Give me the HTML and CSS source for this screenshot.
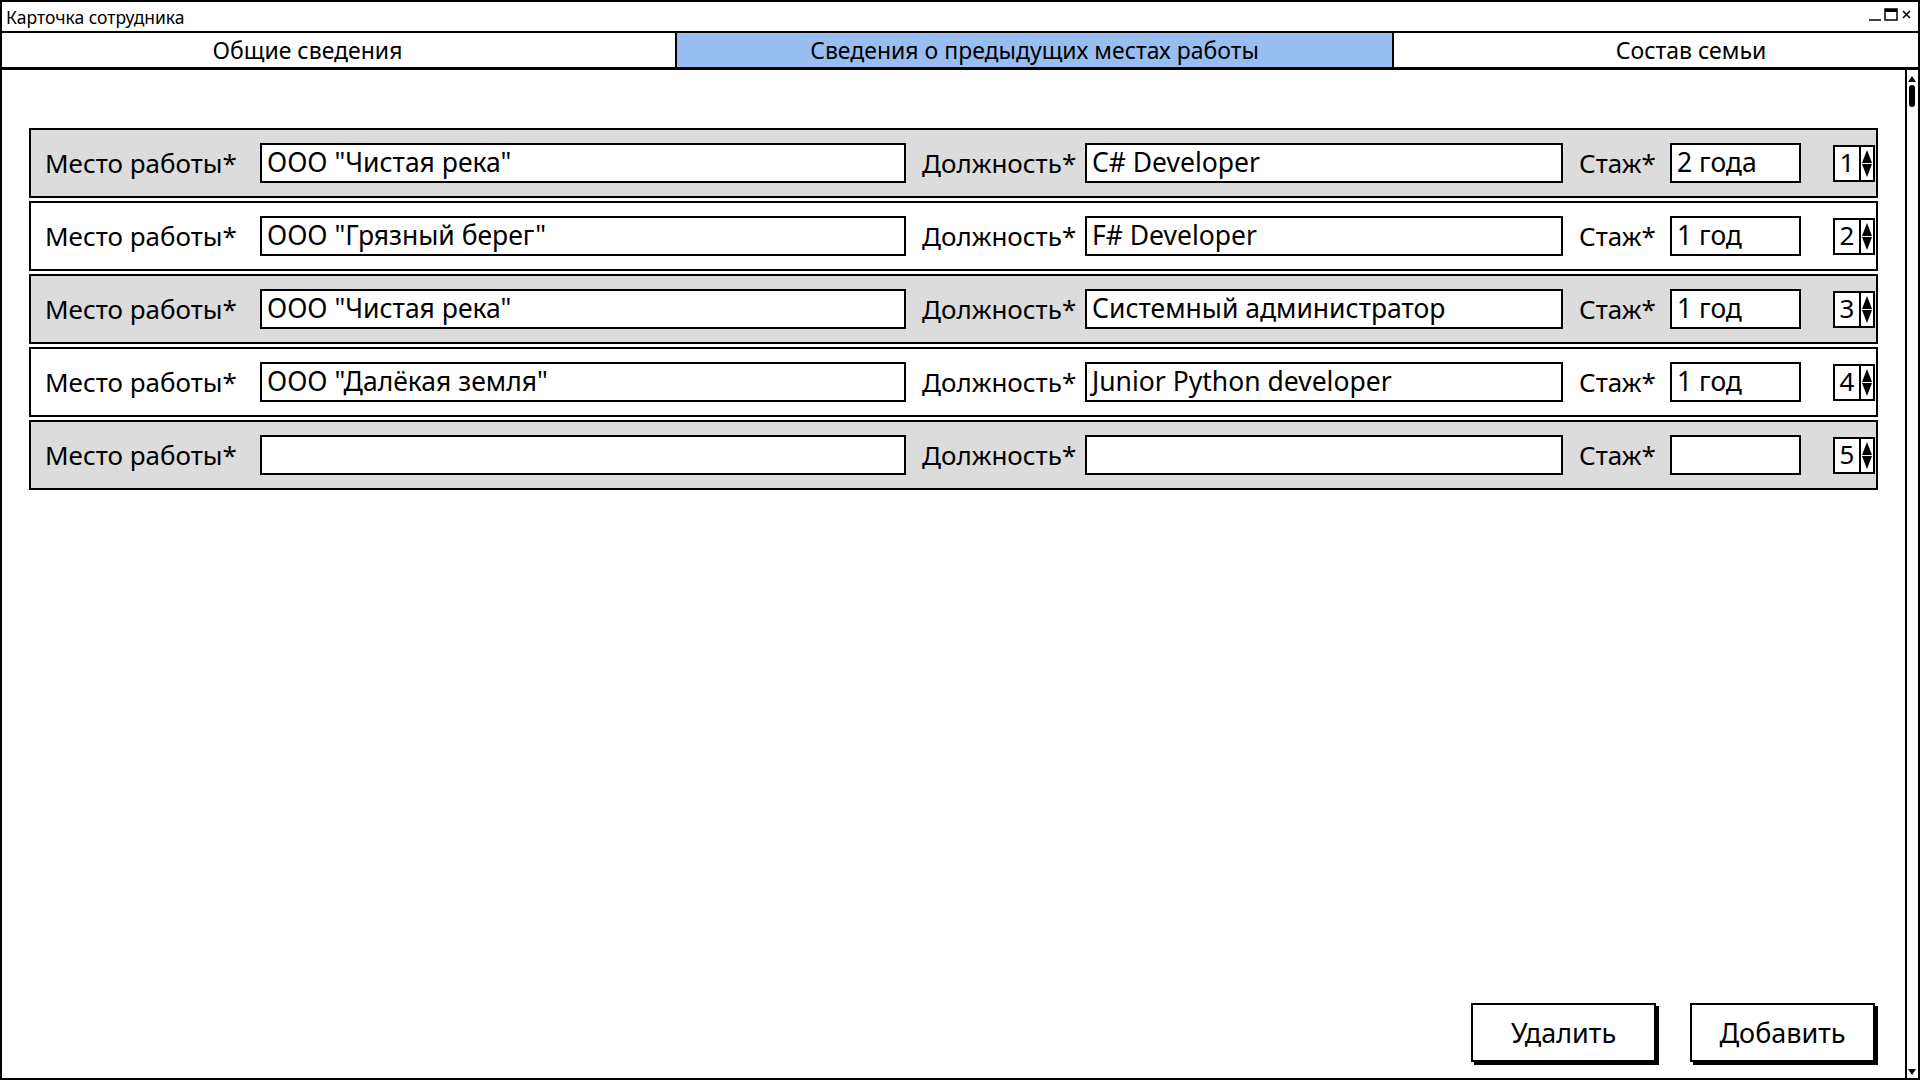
FILE: index.html
```html
<!DOCTYPE html>
<html lang="ru">
  <head>
    <meta charset="UTF-8" />
    <title>Карточка сотрудника</title>
    <link rel="stylesheet" href="styles.css">
  </head>
  <body>
    <div class="window">
      <div class="titlebar">
        <span class="title">Карточка сотрудника</span>
        <svg class="controls" width="48" height="16" viewBox="0 0 48 16">
          <!-- minimize / maximize / close -->
          <line x1="1" y1="14" x2="13" y2="14" stroke="#000" stroke-width="1.5" />
          <rect x="17" y="3" width="12" height="11" fill="none" stroke="#000" stroke-width="1.5" />
          <rect x="17" y="3" width="12" height="3" fill="#000" />
          <path d="M35 5 L42 12 M42 5 L35 12" stroke="#000" stroke-width="1.6" />
        </svg>
      </div>

      <div class="tabs">
        <div class="tab first">Общие сведения</div>
        <div class="tab active">Сведения о предыдущих местах работы</div>
        <div class="tab last">Состав семьи</div>
      </div>

      <div class="body">
        <div class="content">
          <div class="rows">
            <div class="row grey">
              <span class="label">Место работы*</span>
              <div class="field">ООО "Чистая река"</div>
              <span class="label pad">Должность*</span>
              <div class="field">C# Developer</div>
              <span class="label pad">Стаж*</span>
              <div class="field">2 года</div>
              <div class="spin"><span class="num">1</span><span class="arrows"></span></div>
            </div>
            <div class="row">
              <span class="label">Место работы*</span>
              <div class="field">ООО "Грязный берег"</div>
              <span class="label pad">Должность*</span>
              <div class="field">F# Developer</div>
              <span class="label pad">Стаж*</span>
              <div class="field">1 год</div>
              <div class="spin"><span class="num">2</span><span class="arrows"></span></div>
            </div>
            <div class="row grey">
              <span class="label">Место работы*</span>
              <div class="field">ООО "Чистая река"</div>
              <span class="label pad">Должность*</span>
              <div class="field">Системный администратор</div>
              <span class="label pad">Стаж*</span>
              <div class="field">1 год</div>
              <div class="spin"><span class="num">3</span><span class="arrows"></span></div>
            </div>
            <div class="row">
              <span class="label">Место работы*</span>
              <div class="field">ООО "Далёкая земля"</div>
              <span class="label pad">Должность*</span>
              <div class="field">Junior Python developer</div>
              <span class="label pad">Стаж*</span>
              <div class="field">1 год</div>
              <div class="spin"><span class="num">4</span><span class="arrows"></span></div>
            </div>
            <div class="row grey">
              <span class="label">Место работы*</span>
              <div class="field"></div>
              <span class="label pad">Должность*</span>
              <div class="field"></div>
              <span class="label pad">Стаж*</span>
              <div class="field"></div>
              <div class="spin"><span class="num">5</span><span class="arrows"></span></div>
            </div>
          </div>

          <div class="actions">
            <button class="btn">Удалить</button>
            <button class="btn">Добавить</button>
          </div>
        </div>

        <div class="scrollbar">
          <span class="arrow-up"></span>
          <span class="thumb"></span>
          <span class="arrow-down"></span>
        </div>
      </div>
    </div>
  </body>
</html>
```

FILE: styles.css
```css
* {
  margin: 0;
  padding: 0;
  box-sizing: border-box;
  font-family: "Noto Sans", "DejaVu Sans", sans-serif;
}

body {
  background-color: #ffffff;
  color: #000000;
}

.window {
  display: flex;
  flex-direction: column;
  width: 100vw;
  height: 100vh;
  border: 2px solid #000000;
}

/* title bar */
.titlebar {
  display: flex;
  align-items: center;
  justify-content: space-between;
  height: 31px;
  padding: 0 2px 0 4px;
  border-bottom: 2px solid #000000;
}

.title {
  font-size: 17.5px;
}

.controls {
  display: block;
  margin-bottom: 6px;
}

/* tabs */
.tabs {
  display: grid;
  grid-template-columns: 675px 717px 1fr;
  height: 37px;
  border-bottom: 3px solid #000000;
}

.tab {
  display: flex;
  align-items: center;
  justify-content: center;
  font-size: 23px;
  border-right: 2px solid #000000;
}

.tab.first {
  padding-right: 62px;
}

.tab.last {
  padding-left: 70px;
  border-right: none;
}

.tab.active {
  background-color: #97bdf1;
}

/* main area */
.body {
  flex: 1;
  display: flex;
}

.content {
  flex: 1;
  display: flex;
  flex-direction: column;
  padding: 58px 27px 16px 27px;
}

.rows {
  display: flex;
  flex-direction: column;
  gap: 3px;
}

.row {
  display: grid;
  grid-template-columns: 215px 646px 179px 478px 107px 131px 1fr 42px;
  align-items: center;
  height: 70px;
  padding: 0 1px 0 14px;
  border: 2px solid #000000;
  background-color: #ffffff;
}

.row.grey {
  background-color: #dcdcdc;
}

.label {
  font-size: 26px;
  white-space: nowrap;
}

.label.pad {
  padding-left: 16px;
}

.field {
  height: 40px;
  padding-left: 5px;
  font-size: 26.5px;
  line-height: 34px;
  white-space: nowrap;
  background-color: #ffffff;
  border: 2px solid #000000;
}

.spin {
  grid-column: 8;
  display: flex;
  height: 37px;
  border: 2px solid #000000;
  background-color: #ffffff;
}

.spin .num {
  flex: 1;
  font-size: 26px;
  line-height: 31px;
  text-align: center;
}

.spin .arrows {
  position: relative;
  width: 14px;
  border-left: 2px solid #000000;
}

.spin .arrows::before,
.spin .arrows::after {
  content: "";
  position: absolute;
  left: 1px;
  border-left: 5px solid transparent;
  border-right: 5px solid transparent;
}

.spin .arrows::before {
  top: 3px;
  border-bottom: 13px solid #000000;
}

.spin .arrows::after {
  bottom: 3px;
  border-top: 13px solid #000000;
}

/* buttons */
.actions {
  display: flex;
  justify-content: flex-end;
  gap: 34px;
  margin-top: auto;
  padding-right: 3px;
}

.btn {
  width: 185px;
  height: 59px;
  font-size: 27px;
  background-color: #ffffff;
  border: 2px solid #000000;
  box-shadow: 3px 3px 0 #000000;
  cursor: pointer;
}

/* scrollbar */
.scrollbar {
  position: relative;
  width: 13px;
  border-left: 2px solid #000000;
}

.arrow-up,
.arrow-down {
  position: absolute;
  left: 1px;
  width: 0;
  height: 0;
  border-left: 4px solid transparent;
  border-right: 4px solid transparent;
}

.arrow-up {
  top: 6px;
  border-bottom: 6px solid #000000;
}

.arrow-down {
  bottom: 3px;
  border-top: 6px solid #000000;
}

.thumb {
  position: absolute;
  top: 15px;
  left: 2px;
  width: 6px;
  height: 22px;
  border-radius: 3px;
  background-color: #000000;
}
```
